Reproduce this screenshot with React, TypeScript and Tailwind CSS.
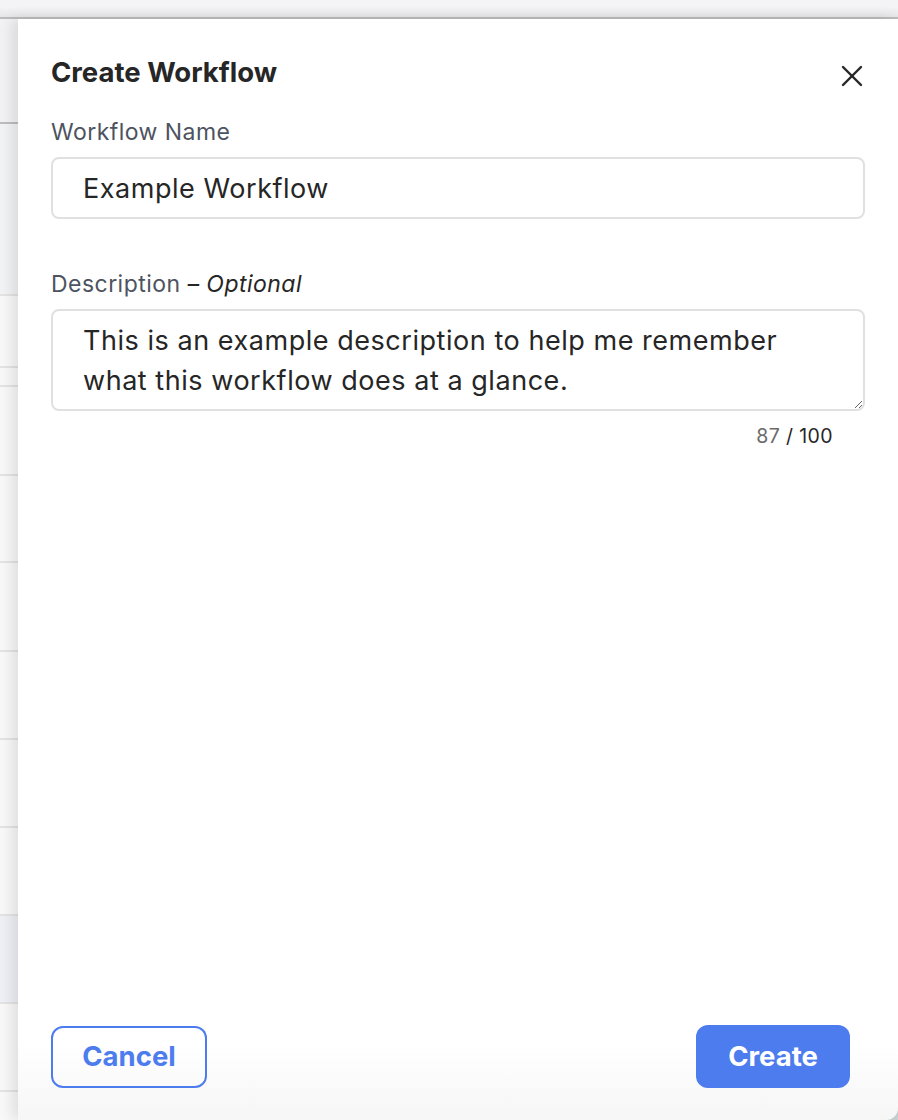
import { X } from 'lucide-react'

// rows of the list that sits behind the drawer (only a sliver shows on the left)
const rows = [
  { h: 105, bg: 'bg-[#f2f2f4]', line: 'border-[#bdbdbd]' },
  { h: 172, bg: 'bg-[#f2f3f5]', line: 'border-[#e3e3e3]' },
  { h: 72, bg: 'bg-[#f8f8f8]', line: 'border-[#e3e3e3]' },
  { h: 19, bg: 'bg-[#f8f8f8]', line: 'border-[#e3e3e3]' },
  { h: 89, bg: 'bg-[#f8f8f8]', line: 'border-[#e3e3e3]' },
  { h: 87, bg: 'bg-[#f8f8f8]', line: 'border-[#e3e3e3]' },
  { h: 89, bg: 'bg-[#f8f8f8]', line: 'border-[#e3e3e3]' },
  { h: 88, bg: 'bg-[#f8f8f8]', line: 'border-[#e3e3e3]' },
  { h: 88, bg: 'bg-[#f8f8f8]', line: 'border-[#e3e3e3]' },
  { h: 88, bg: 'bg-[#f8f8f8]', line: 'border-[#e3e3e3]' },
  { h: 88, bg: 'bg-[#eef0f6]', line: 'border-[#e3e3e3]' },
  { h: 88, bg: 'bg-[#f8f8f8]', line: 'border-[#e3e3e3]' },
  { h: 40, bg: 'bg-[#f8f8f8]', line: 'border-transparent' },
]

const font = { fontFamily: 'Inter, "Noto Sans", sans-serif' }

function BackgroundList() {
  return (
    <div className="w-[18px] shrink-0 flex flex-col overflow-hidden">
      {rows.map((r, i) => (
        <div key={i} className={`${r.bg} ${r.line} border-b-2 shrink-0`} style={{ height: r.h }} />
      ))}
    </div>
  )
}

function CreateWorkflowDrawer() {
  const description = 'This is an example description to help me remember what this workflow does at a glance.'

  return (
    <div className="relative flex-1 flex flex-col rounded-br-[12px] bg-[linear-gradient(to_bottom,#ffffff_93%,#f6f6f6)] shadow-[-6px_0_14px_rgba(0,0,0,0.10)] px-[33px] pt-[37px] pb-[32px]">
      <button className="absolute right-[28px] top-[39px] text-[#262626]">
        <X className="w-[36px] h-[36px]" strokeWidth={1.6} />
      </button>

      <h2 className="text-[27.5px] leading-[32px] font-bold text-[#262626]">Create Workflow</h2>

      <label className="mt-[30px] text-[23px] leading-[28px] tracking-[0.02em] text-[#4d5360]">Workflow Name</label>
      <input
        readOnly
        value="Example Workflow"
        className="mt-[11px] h-[62px] w-full rounded-[8px] border-2 border-[#e0e0e3] px-[30px] text-[27px] tracking-[0.02em] text-[#262626] outline-none"
      />

      <label className="mt-[51px] text-[23px] leading-[28px] tracking-[0.02em] text-[#4d5360]">
        Description <span className="text-[#262626] italic">– Optional</span>
      </label>
      <textarea
        readOnly
        value={description}
        className="mt-[11px] h-[102px] w-full rounded-[8px] border-2 border-[#e0e0e3] px-[30px] py-[10px] text-[27px] leading-[40px] tracking-[0.02em] text-[#262626] outline-none resize-y"
      />
      <div className="mt-[13px] pr-[32px] text-right text-[19.5px] leading-[24px] tracking-[0.02em] text-[#262626]">
        <span className="text-[#6b6b6b]">87</span> / 100
      </div>

      <div className="mt-auto flex items-center justify-between pr-[15px]">
        <button className="h-[62px] w-[156px] rounded-[12px] border-2 border-[#4d7cef] text-[27.5px] font-bold text-[#4d7cef]">
          Cancel
        </button>
        <button className="h-[63px] w-[154px] rounded-[12px] bg-[#4d7cef] text-[27.5px] font-bold text-white">
          Create
        </button>
      </div>
    </div>
  )
}

export default function App() {
  return (
    <div className="w-[898px] h-[1120px] flex flex-col overflow-hidden bg-[#c6d0d0]" style={font}>
      <div className="h-[19px] shrink-0 bg-[linear-gradient(to_bottom,#f4f4f6_40%,#e6e6e8)] border-b-2 border-[#bcbcbc]" />
      <div className="flex-1 flex min-h-0">
        <BackgroundList />
        <CreateWorkflowDrawer />
      </div>
    </div>
  )
}
